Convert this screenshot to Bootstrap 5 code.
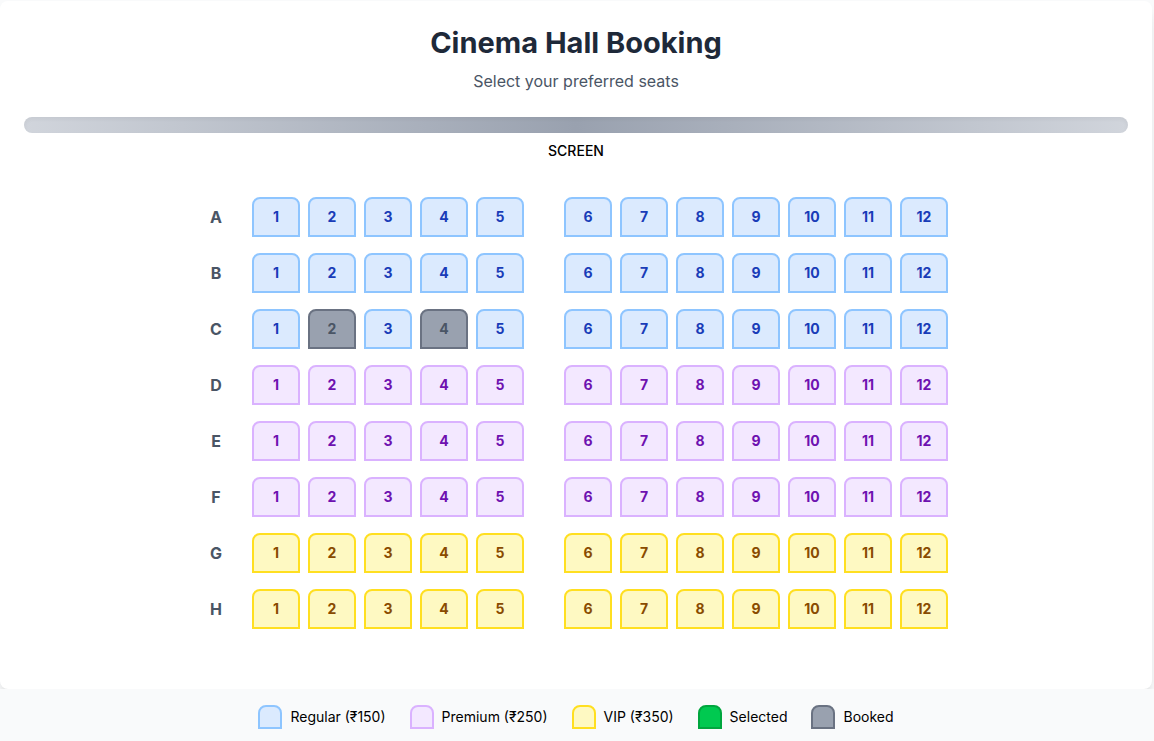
<!DOCTYPE html>
<html lang="en">
<head>
<meta charset="utf-8">
<meta name="viewport" content="width=device-width, initial-scale=1">
<title>Cinema Hall Booking</title>
<link href="https://cdn.jsdelivr.net/npm/bootstrap@5.3.0/dist/css/bootstrap.min.css" rel="stylesheet">
<style>
  body { font-family: Inter, "Liberation Sans", sans-serif; background: #f9fafb; color: #000; }
  .hall { margin: 1px 2px 0 0; padding: 24px 24px 60px; background: #fff; border-radius: 8px;
    box-shadow: 0 10px 15px -3px rgba(0,0,0,.1), 0 4px 6px -4px rgba(0,0,0,.1); }
  .hall-title { font-size: 29px; line-height: 36px; color: #1e2939; }
  .hall-sub { font-size: 16px; line-height: 24px; color: #4a5565; }
  .screen-bar { height: 16px; border-radius: 8px;
    background: linear-gradient(to right, #d1d5dc, #99a1af, #d1d5dc);
    box-shadow: inset 0 2px 4px rgba(0,0,0,.05); }
  .screen-label { font-size: 14px; line-height: 20px; font-weight: 500; }
  .row-name { width: 24px; margin-right: 16px; font-size: 16px; line-height: 24px; color: #4a5565; }
  .aisle { width: 24px; }
  .seat { width: 48px; height: 40px; padding: 0; font-size: 14px; line-height: 20px; font-weight: 700;
    border: 2px solid; border-radius: 8px 8px 0 0; }
  .seat:disabled { cursor: not-allowed; }
  .swatch { width: 24px; height: 24px; border: 2px solid; border-radius: 8px 8px 0 0; }
  .regular { background: #dbeafe; border-color: #8ec5ff; color: #193cb8; }
  .premium { background: #f3e8ff; border-color: #dab2ff; color: #6e11b0; }
  .vip { background: #fef9c2; border-color: #ffdf20; color: #894b00; }
  .selected { background: #00c950; border-color: #00a63e; color: #fff; }
  .booked { background: #99a1af; border-color: #6a7282; color: #4a5565; }
  .legend-bar { margin-right: 2px; font-size: 14px; line-height: 20px; background: #f9fafb; box-shadow: 2px 0 #f9fafb; }
</style>
</head>
<body>
<main class="hall">
  <header class="text-center mb-4">
    <h1 class="hall-title fw-bold mb-2">Cinema Hall Booking</h1>
    <p class="hall-sub mb-0">Select your preferred seats</p>
  </header>
  <div class="screen-bar mb-2"></div>
  <p class="screen-label text-center mb-0 pb-2">SCREEN</p>
  <div id="seats" class="d-flex flex-column align-items-center gap-3 pt-4 mt-1"></div>
</main>
<footer class="legend-bar position-relative d-flex flex-wrap justify-content-center gap-4 p-3">
  <div class="d-flex align-items-center gap-2"><span class="swatch regular"></span><span>Regular (₹150)</span></div>
  <div class="d-flex align-items-center gap-2"><span class="swatch premium"></span><span>Premium (₹250)</span></div>
  <div class="d-flex align-items-center gap-2"><span class="swatch vip"></span><span>VIP (₹350)</span></div>
  <div class="d-flex align-items-center gap-2"><span class="swatch selected"></span><span>Selected</span></div>
  <div class="d-flex align-items-center gap-2"><span class="swatch booked"></span><span>Booked</span></div>
</footer>
<script src="https://cdn.jsdelivr.net/npm/bootstrap@5.3.0/dist/js/bootstrap.bundle.min.js"></script>
<script>
  const rows = { A: 'regular', B: 'regular', C: 'regular', D: 'premium', E: 'premium', F: 'premium', G: 'vip', H: 'vip' };
  const booked = ['C2', 'C4'];
  const hall = document.getElementById('seats');
  for (const [name, tier] of Object.entries(rows)) {
    let html = `<span class="row-name text-center fw-bold">${name}</span>`;
    for (let n = 1; n <= 12; n++) {
      const taken = booked.includes(name + n);
      if (n === 6) html += '<span class="aisle"></span>';
      html += `<button type="button" class="seat ${taken ? 'booked' : tier}" aria-label="Seat ${name}${n}"${taken ? ' disabled' : ''}>${n}</button>`;
    }
    const line = document.createElement('div');
    line.className = 'd-flex align-items-center gap-2';
    line.innerHTML = html;
    hall.append(line);
  }
  hall.addEventListener('click', e => {
    const seat = e.target.closest('.seat');
    if (seat) seat.classList.toggle('selected');
  });
</script>
</body>
</html>
